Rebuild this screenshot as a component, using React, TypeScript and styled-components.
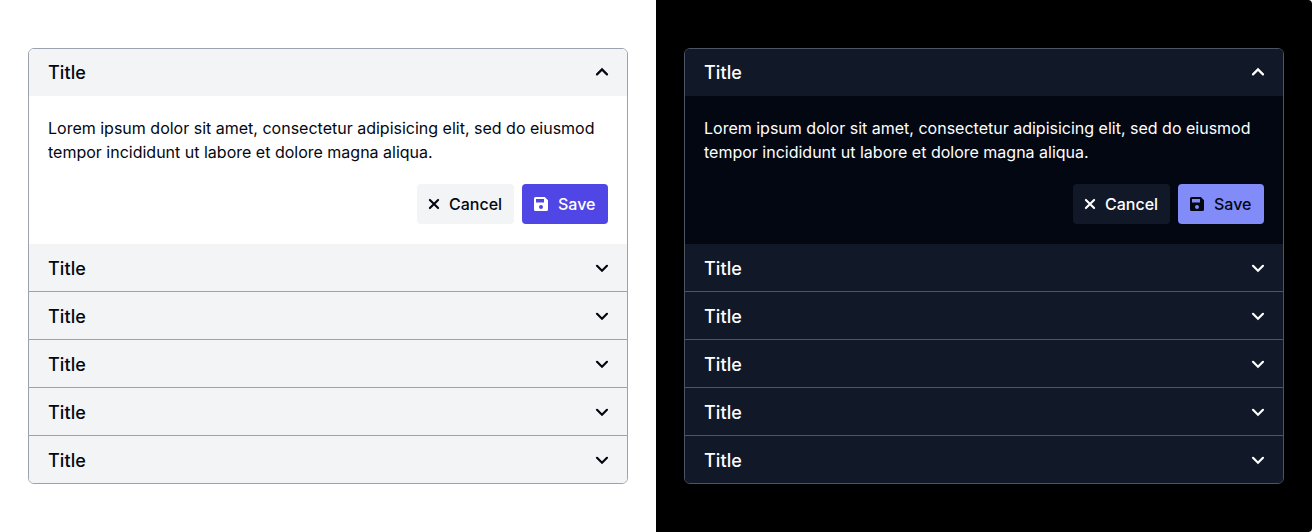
import React from "react";
import styled, { createGlobalStyle, ThemeProvider } from "styled-components";

const Global = createGlobalStyle`
  *, *::before, *::after { box-sizing: border-box; }
  body { margin: 0; background: #fff; font-family: Inter, sans-serif; }
  button { font: inherit; }
`;

const light = {
  page: "#ffffff", body: "#ffffff", header: "#f3f4f6", border: "#9ca3af",
  text: "#030712", primary: "#4f46e5", onPrimary: "#ffffff", corner: "0",
};
const dark: typeof light = {
  page: "#000000", body: "#030712", header: "#111827", border: "#4b5563",
  text: "#ffffff", primary: "#818cf8", onPrimary: "#030712", corner: "0 4px 4px 0",
};

const Page = styled.main`
  display: grid;
  grid-template-columns: 1fr 1fr;
  height: 532px;
`;

const Panel = styled.section`
  padding: 48px 28px;
  border-radius: ${({ theme }) => theme.corner};
  background: ${({ theme }) => theme.page};
  color: ${({ theme }) => theme.text};
`;

const Accordion = styled.div`
  border: 1px solid ${({ theme }) => theme.border};
  border-radius: 6px;
  overflow: hidden;
  background: ${({ theme }) => theme.body};
`;

const Header = styled.button<{ $divided?: boolean; $open?: boolean }>`
  display: flex;
  align-items: center;
  justify-content: space-between;
  width: 100%;
  height: ${({ $divided }) => ($divided ? 48 : 47)}px;
  padding: ${({ $open }) => ($open ? "0 13px 1px 19px" : "1px 13px 0 19px")};
  border: 0;
  border-bottom: ${({ $divided, theme }) => ($divided ? `1px solid ${theme.border}` : "0")};
  background: ${({ theme }) => theme.header};
  color: inherit;
  font-size: 18px;
  font-weight: 500;
  line-height: 24px;

  svg {
    flex: none;
    width: 24px;
    height: 24px;
  }
`;

const Title = styled.span<{ $open?: boolean }>`
  padding-top: ${({ $open }) => ($open ? 1 : 2)}px;
  letter-spacing: 0.1px;
`;

const Content = styled.div`
  padding: 20px 19px;
  font-size: 16px;
  line-height: 24px;
`;

const Text = styled.p`
  margin: 0 0 20px;
`;

const Actions = styled.div`
  display: flex;
  justify-content: flex-end;
  gap: 8px;
`;

const Button = styled.button<{ $primary?: boolean }>`
  display: flex;
  align-items: center;
  gap: ${({ $primary }) => ($primary ? 8 : 6)}px;
  width: ${({ $primary }) => ($primary ? 86 : 97)}px;
  height: 40px;
  padding: 0 0 0 ${({ $primary }) => ($primary ? 10 : 8)}px;
  border: 0;
  border-radius: 4px;
  background: ${({ $primary, theme }) => ($primary ? theme.primary : theme.header)};
  color: ${({ $primary, theme }) => ($primary ? theme.onPrimary : theme.text)};
  font-weight: 500;
  line-height: 24px;

  svg {
    flex: none;
    width: 18px;
    height: 18px;
  }
`;

const Chevron = ({ up }: { up?: boolean }) => (
  <svg viewBox="0 0 24 24" fill="none" stroke="currentColor" strokeWidth="2.2" strokeLinecap="round">
    <path d={up ? "M7 14.4l5-5 5 5" : "M7 9.8l5 5 5-5"} />
  </svg>
);

const CloseIcon = () => (
  <svg viewBox="0 0 18 18" fill="none" stroke="currentColor" strokeWidth="2.1" strokeLinecap="round">
    <path d="M4.9 4.9l8.2 8.2M13.1 4.9l-8.2 8.2" />
  </svg>
);

const SaveIcon = () => (
  <svg viewBox="0 0 18 18" fill="currentColor" fillRule="evenodd">
    <path d="M3.6 2h9.2L16 5.2v9.2a1.6 1.6 0 0 1-1.6 1.6H3.6A1.6 1.6 0 0 1 2 14.4V3.6A1.6 1.6 0 0 1 3.6 2ZM4 4v3.5h8V4ZM9 10a2 2 0 1 0 0 4 2 2 0 0 0 0-4Z" />
  </svg>
);

const Card = () => (
  <Panel>
    <Accordion>
      <Header $open>
        <Title $open>Title</Title>
        <Chevron up />
      </Header>
      <Content>
        <Text>Lorem ipsum dolor sit amet, consectetur adipisicing elit, sed do eiusmod tempor incididunt ut labore et dolore magna aliqua.</Text>
        <Actions>
          <Button><CloseIcon />Cancel</Button>
          <Button $primary><SaveIcon />Save</Button>
        </Actions>
      </Content>
      {[0, 1, 2, 3, 4].map((i) => (
        <Header key={i} $divided={i < 4}>
          <Title>Title</Title>
          <Chevron />
        </Header>
      ))}
    </Accordion>
  </Panel>
);

export default function App() {
  return (
    <>
      <Global />
      <Page>
        <ThemeProvider theme={light}><Card /></ThemeProvider>
        <ThemeProvider theme={dark}><Card /></ThemeProvider>
      </Page>
    </>
  );
}
